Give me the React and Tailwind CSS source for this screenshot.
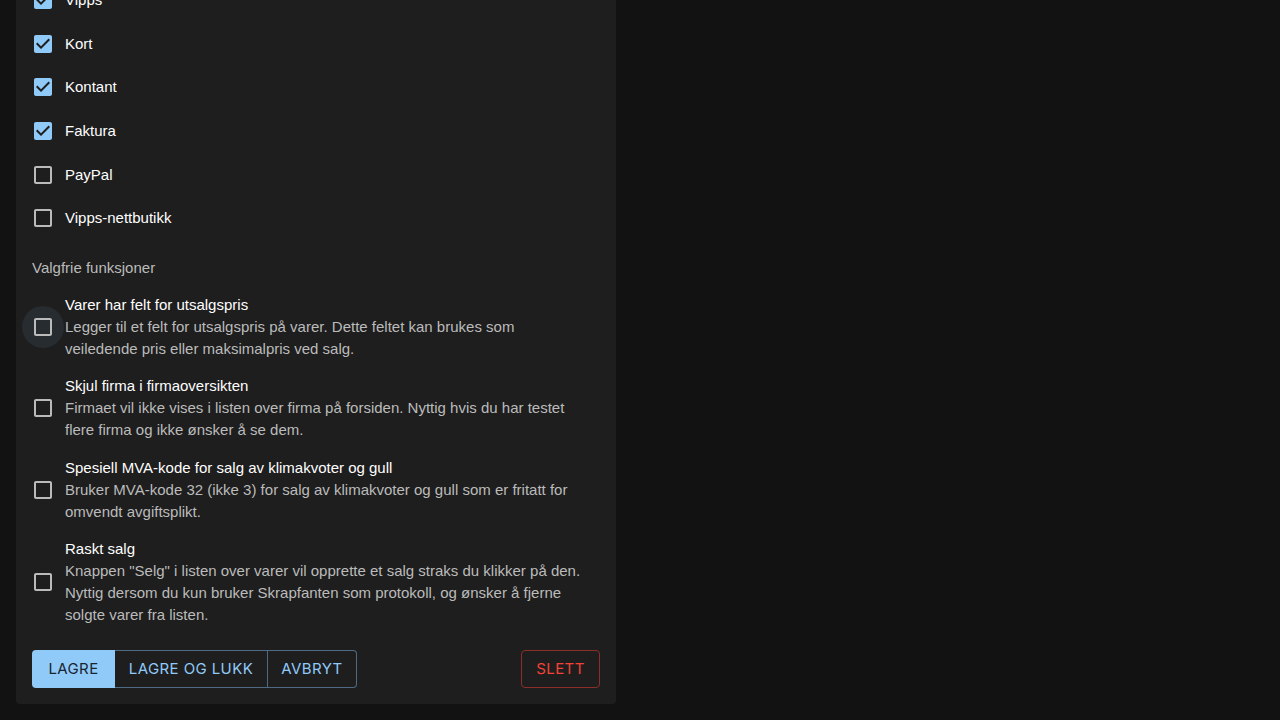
import React from "react";

const CheckedIcon = () => (
  <svg viewBox="0 0 24 24" width="24" height="24" className="fill-[#90caf9]">
    <path d="M19 3H5c-1.11 0-2 .9-2 2v14c0 1.1.89 2 2 2h14c1.11 0 2-.9 2-2V5c0-1.1-.89-2-2-2zm-9 14l-5-5 1.41-1.41L10 14.17l7.59-7.59L19 8l-9 9z" />
  </svg>
);

const BlankIcon = () => (
  <svg viewBox="0 0 24 24" width="24" height="24" className="fill-[#bbbbbb]">
    <path d="M19 5v14H5V5h14m0-2H5c-1.1 0-2 .9-2 2v14c0 1.1.9 2 2 2h14c1.1 0 2-.9 2-2V5c0-1.1-.9-2-2-2z" />
  </svg>
);

const Box = ({ checked, hover }) => (
  <span
    className={
      "flex h-[42px] w-[42px] shrink-0 items-center justify-center rounded-full " +
      (hover ? "bg-[#272c30]" : "")
    }
  >
    {checked ? <CheckedIcon /> : <BlankIcon />}
  </span>
);

const payments = [
  ["Vipps", true],
  ["Kort", true],
  ["Kontant", true],
  ["Faktura", true],
  ["PayPal", false],
  ["Vipps-nettbutikk", false],
];

const options = [
  {
    title: "Varer har felt for utsalgspris",
    desc: "Legger til et felt for utsalgspris på varer. Dette feltet kan brukes som veiledende pris eller maksimalpris ved salg.",
    hover: true,
  },
  {
    title: "Skjul firma i firmaoversikten",
    desc: "Firmaet vil ikke vises i listen over firma på forsiden. Nyttig hvis du har testet flere firma og ikke ønsker å se dem.",
  },
  {
    title: "Spesiell MVA-kode for salg av klimakvoter og gull",
    desc: "Bruker MVA-kode 32 (ikke 3) for salg av klimakvoter og gull som er fritatt for omvendt avgiftsplikt.",
  },
  {
    title: "Raskt salg",
    desc: 'Knappen "Selg" i listen over varer vil opprette et salg straks du klikker på den. Nyttig dersom du kun bruker Skrapfanten som protokoll, og ønsker å fjerne solgte varer fra listen.',
  },
];

export default function App() {
  return (
    <div
      className="h-[720px] overflow-hidden bg-[#121212] text-[15px]"
      style={{ fontFamily: '"Liberation Sans", Arial, sans-serif' }}
    >
      <div className="ml-4 mt-[-22px] w-[600px] rounded-b bg-[#1e1e1e] px-4 pb-4">
        <div className="flex flex-col">
          {payments.map(([label, checked]) => (
            <label key={label} className="ml-[-10px] flex h-[43.7px] items-center">
              <Box checked={checked} />
              <span className="pl-[1px] leading-[22px] text-white">{label}</span>
            </label>
          ))}
        </div>

        <div className="mt-[17px] leading-[22px] text-[#bbbbbb]">Valgfrie funksjoner</div>

        <div className="mt-[15px] flex flex-col gap-[15.3px]">
          {options.map((o) => (
            <label key={o.title} className="ml-[-10px] mr-[16px] flex items-center">
              <Box checked={false} hover={o.hover} />
              <span className="flex flex-col pl-[1px] leading-[22px]">
                <span className="text-white">{o.title}</span>
                <span className="text-[#bbbbbb]">{o.desc}</span>
              </span>
            </label>
          ))}
        </div>

        <div
          className="mt-[24px] flex h-[38px] items-stretch justify-between text-[15px] tracking-[0.4px]"
          style={{ fontFamily: "Inter, sans-serif" }}
        >
          <div className="flex">
            <button className="w-[83px] rounded-l bg-[#90caf9] uppercase text-[#1a2530]">Lagre</button>
            <button className="w-[153px] border-y border-r border-[#4f6b84] uppercase text-[#90caf9]">
              Lagre og lukk
            </button>
            <button className="w-[89px] rounded-r border-y border-r border-[#4f6b84] uppercase text-[#90caf9]">
              Avbryt
            </button>
          </div>
          <button className="w-[79px] rounded border border-[#8a2f29] uppercase text-[#f44336]">Slett</button>
        </div>
      </div>
    </div>
  );
}
